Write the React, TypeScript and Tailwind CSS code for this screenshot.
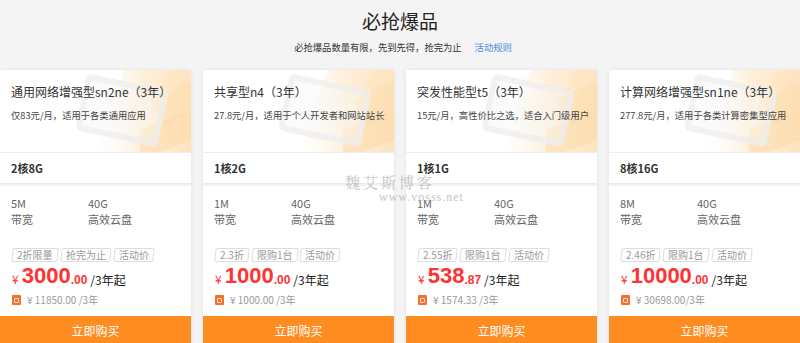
import React from 'react';

interface Product {
  name: string;
  desc: string;
  config: string;
  bandwidth: string;
  disk: string;
  tags: string[];
  price: string;
  cents: string;
  original: string;
}

const products: Product[] = [
  {
    name: '通用网络增强型sn2ne（3年）',
    desc: '仅83元/月，适用于各类通用应用',
    config: '2核8G',
    bandwidth: '5M',
    disk: '40G',
    tags: ['2折限量', '抢完为止', '活动价'],
    price: '3000',
    cents: '.00',
    original: '¥ 11850.00 /3年',
  },
  {
    name: '共享型n4（3年）',
    desc: '27.8元/月，适用于个人开发者和网站站长',
    config: '1核2G',
    bandwidth: '1M',
    disk: '40G',
    tags: ['2.3折', '限购1台', '活动价'],
    price: '1000',
    cents: '.00',
    original: '¥ 1000.00 /3年',
  },
  {
    name: '突发性能型t5（3年）',
    desc: '15元/月，高性价比之选，适合入门级用户',
    config: '1核1G',
    bandwidth: '1M',
    disk: '40G',
    tags: ['2.55折', '限购1台', '活动价'],
    price: '538',
    cents: '.87',
    original: '¥ 1574.33 /3年',
  },
  {
    name: '计算网络增强型sn1ne（3年）',
    desc: '277.8元/月，适用于各类计算密集型应用',
    config: '8核16G',
    bandwidth: '8M',
    disk: '40G',
    tags: ['2.46折', '限购1台', '活动价'],
    price: '10000',
    cents: '.00',
    original: '¥ 30698.00/3年',
  },
];

const font = "font-['Noto_Sans_CJK_SC',sans-serif]";

// light orange shapes behind the card header
const HeaderArt = () => (
  <svg className="absolute inset-0 h-full w-full" viewBox="0 0 191 82" preserveAspectRatio="none">
    <defs>
      <linearGradient id="og" x1="0" y1="0" x2="1" y2="0">
        <stop offset="0" stopColor="#fff6ea" stopOpacity="0" />
        <stop offset="0.5" stopColor="#feebd0" stopOpacity="0.8" />
        <stop offset="1" stopColor="#fde0b6" stopOpacity="0.9" />
      </linearGradient>
    </defs>
    <polygon points="125,0 191,0 191,82 95,82" fill="url(#og)" />
    <polygon points="150,30 191,10 191,40 165,55" fill="#fddcaa" opacity="0.5" />
    <polygon points="140,60 191,40 191,70 160,82 140,82" fill="#fcd59c" opacity="0.4" />
    <polygon points="170,0 191,0 191,12 160,22" fill="#fee6c2" opacity="0.7" />
    <g transform="rotate(12 120 45)" opacity="0.8">
      <rect x="82" y="14" width="78" height="52" rx="3" fill="#f7f7f7" fillOpacity="0.5" stroke="#efefef" strokeWidth="6" />
    </g>
  </svg>
);

const Card = ({ p }: { p: Product }) => (
  <div className="flex w-[191px] shrink-0 flex-col bg-white shadow-[0_0_4px_rgba(0,0,0,0.08)]">
    <div className="relative h-[82px] overflow-hidden px-[11px] pt-[14px]">
      <HeaderArt />
      <div className="relative text-[12px] leading-[16px] text-[#333] whitespace-nowrap">{p.name}</div>
      <div className="relative mt-[8px] text-[9.3px] leading-[14px] text-[#444] whitespace-nowrap">{p.desc}</div>
    </div>
    <div className="flex h-[31px] items-center border-t border-[#eee] px-[11px] text-[11px] font-semibold text-[#333]">
      {p.config}
    </div>
    <div className="h-[3px] bg-gradient-to-b from-[#e9e9e9] to-[#f6f6f6]" />
    <div className="grid grid-cols-[77px_1fr] px-[11px] pt-[9px] text-[11px] leading-[16px] text-[#666]">
      <div>{p.bandwidth}</div>
      <div>{p.disk}</div>
      <div>带宽</div>
      <div>高效云盘</div>
    </div>
    <div className="mt-[21px] flex gap-[3px] px-[12px]">
      {p.tags.map((t) => (
        <div key={t} className="flex h-[14px] -skew-x-6 items-center rounded-[2px] border border-[#ddd] px-[4px]">
          <span className="skew-x-6 text-[10px] leading-none text-[#999]">{t}</span>
        </div>
      ))}
    </div>
    <div className="mt-[2px] flex h-[26px] items-end px-[12px] pb-[3px]">
      <span className="mb-[2px] text-[12px] leading-none text-[#f33]">¥</span>
      <span className="ml-[3px] font-['Liberation_Sans',sans-serif] text-[22px] font-bold leading-none text-[#f33]">
        {p.price}
      </span>
      <span className="mb-[1px] font-['Liberation_Sans',sans-serif] text-[12px] font-bold leading-none text-[#f33]">
        {p.cents}
      </span>
      <span className="mb-[1px] ml-[3px] text-[12px] leading-none text-[#222]">/3年起</span>
    </div>
    <div className="mt-[4px] flex h-[12px] items-center gap-[6px] px-[12px]">
      <div className="flex h-[10px] w-[9px] items-center justify-center rounded-[1px] bg-[#f5702a]">
        <div className="h-[5px] w-[5px] rounded-[1px] border border-white/80" />
      </div>
      <span className="text-[10px] leading-none text-[#999]">{p.original}</span>
    </div>
    <button className="mt-[10px] flex h-[30px] items-center justify-center bg-[#fe8c20] text-[12px] text-white">
      立即购买
    </button>
  </div>
);

export default function App() {
  return (
    <div className={`relative h-[343px] w-[800px] overflow-hidden bg-[#f4f4f4] ${font}`}>
      <div className="pt-[9px] text-center text-[19px] leading-[24px] text-[#222]">必抢爆品</div>
      <div className="mt-[8px] flex justify-center gap-[13px] pl-[6px] text-[9.3px] leading-[12px]">
        <span className="text-[#333]">必抢爆品数量有限，先到先得，抢完为止</span>
        <span className="text-[#4a8fd9]">活动规则</span>
      </div>
      <div className="mt-[17px] flex gap-[12px]">
        {products.map((p) => (
          <Card key={p.name} p={p} />
        ))}
      </div>
      <div className="pointer-events-none absolute left-[345px] top-[174px] text-[#b8b8b8] opacity-80">
        <div className="font-['Noto_Serif_CJK_SC','Liberation_Serif',serif] text-[15px] leading-[16px] tracking-[3px]">
          魏艾斯博客
        </div>
        <div className="ml-[34px] font-['Liberation_Serif',serif] text-[12px] leading-[14px] tracking-[1px]">
          www.vpsss.net
        </div>
      </div>
    </div>
  );
}
